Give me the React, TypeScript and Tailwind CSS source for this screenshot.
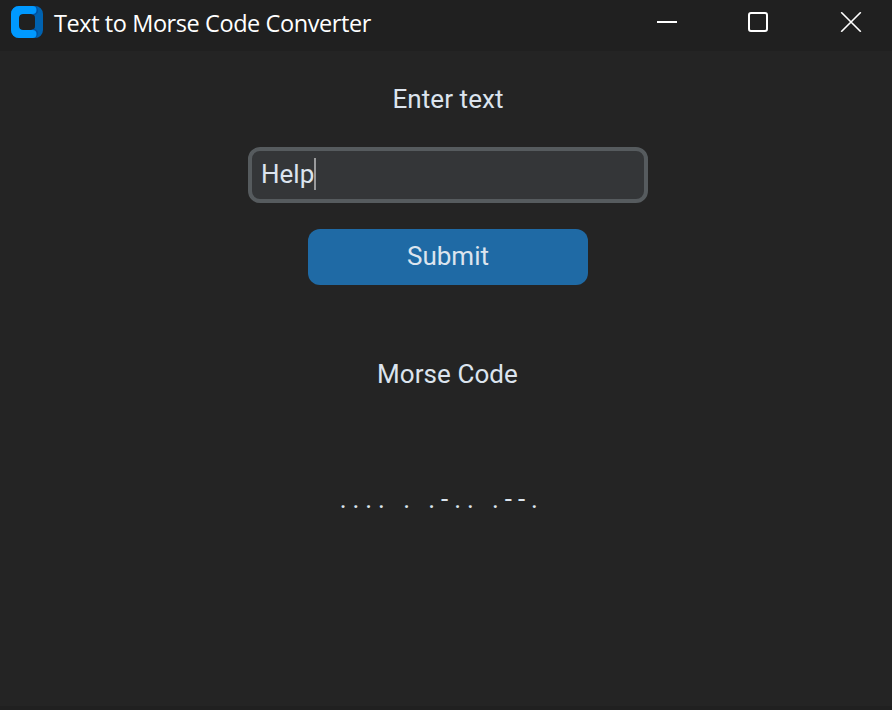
import { useState } from "react";

function AppIcon() {
  return (
    <svg width="32" height="32" viewBox="0 0 32 32" className="ml-[11px] mt-1.5 shrink-0">
      <path
        fillRule="evenodd"
        d="M8 0H24A8 8 0 0 1 32 8V24A8 8 0 0 1 24 32H8A8 8 0 0 1 0 24V8A8 8 0 0 1 8 0ZM12 8A4 4 0 0 0 8 12V20A4 4 0 0 0 12 24H20A4 4 0 0 0 24 20V12A4 4 0 0 0 20 8Z"
        fill="#0062b0"
      />
      <path d="M24 0A5 5 0 0 1 26.5 7L23.5 9.5L20 8V0ZM24 32A5 5 0 0 0 26.5 25L23.5 22.5L20 24V32Z" fill="#0050a0" />
      <path
        d="M8 0H21.5A4 4 0 0 1 21.5 8H12A4 4 0 0 0 8 12V20A4 4 0 0 0 12 24H21.5A4 4 0 0 1 21.5 32H8A8 8 0 0 1 0 24V8A8 8 0 0 1 8 0Z"
        fill="#0099ff"
      />
    </svg>
  );
}

function TitleBar() {
  return (
    <header className="flex h-[51px] shrink-0 items-start bg-[#202020]">
      <AppIcon />
      <h1 className="ml-[11px] mt-[7px] whitespace-nowrap font-['Open_Sans',sans-serif] text-[23.5px] leading-8 tracking-[-0.42px] text-white">
        Text to Morse Code Converter
      </h1>
      <div className="ml-auto mr-[30px] mt-3 flex">
        <button aria-label="Minimize" className="mr-[71px]">
          <svg width="20" height="20" className="block">
            <path d="M0 10H20" stroke="#fff" strokeWidth="2" />
          </svg>
        </button>
        <button aria-label="Maximize" className="mr-[72px]">
          <svg width="20" height="20" className="block">
            <rect x="1" y="1" width="18" height="18" rx="2" fill="none" stroke="#fff" strokeWidth="2" />
          </svg>
        </button>
        <button aria-label="Close">
          <svg width="22" height="20" className="block">
            <path d="M1.2 .3L20.8 19.7M20.8 .3L1.2 19.7" stroke="#fff" strokeWidth="1.6" />
          </svg>
        </button>
      </div>
    </header>
  );
}

export default function App() {
  const [text] = useState("Help");
  return (
    <div className="flex h-[710px] w-[892px] flex-col overflow-hidden bg-[#242424] font-[Roboto,sans-serif] text-[26px] leading-8 text-[#dce4ee]">
      <TitleBar />
      <main className="flex grow flex-col items-center pl-1">
        <label className="mt-8 tracking-[0.07px]">Enter text</label>
        <div className="mt-8 flex h-14 w-[400px] items-center rounded-xl border-4 border-[#565b5e] bg-[#343638] pl-[9px]">
          <span className="-mt-0.5">{text}</span>
          <span className="-mt-0.5 h-8 w-0.5 bg-[#9a9b9c]" />
        </div>
        <button className="mt-[26px] h-14 w-[280px] rounded-xl bg-[#1f6aa5] pb-0.5">Submit</button>
        <p className="mt-[73px] pr-px tracking-[0.07px]">Morse Code</p>
        <p className="mt-[93px] whitespace-pre tracking-[-0.27px]">{". . . .   .   . - . .   . - - .   "}</p>
      </main>
      <div className="h-1 shrink-0 bg-[#202020]" />
    </div>
  );
}
